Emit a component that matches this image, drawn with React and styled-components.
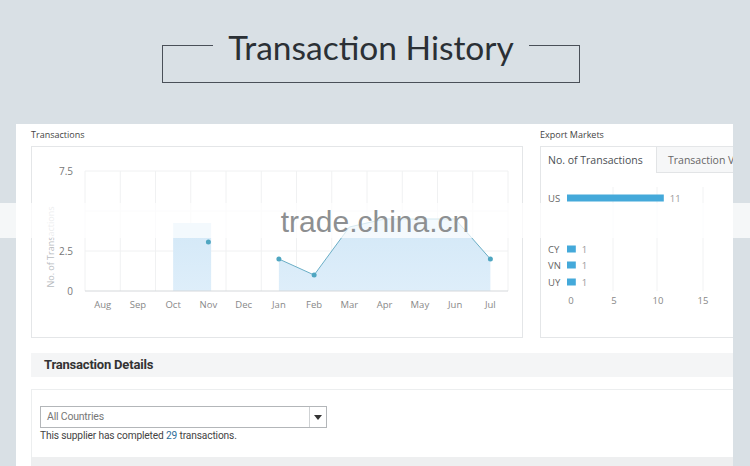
import React from "react";
import styled, { createGlobalStyle } from "styled-components";

const GlobalStyle = createGlobalStyle`
  html, body { margin: 0; padding: 0; background: #d9e0e5; }
  body { font-family: "Open Sans", "Noto Sans", sans-serif; }
`;

const Page = styled.div`
  position: relative;
  width: 750px;
  height: 466px;
  overflow: hidden;
  background: #d9e0e5;
`;

const Header = styled.header`
  height: 124px;
  display: flex;
  justify-content: center;
  padding: 45px 8px 0 0;
  box-sizing: border-box;
`;

const Frame = styled.div`
  width: 418px;
  height: 38px;
  box-sizing: border-box;
  border: 1px solid #4a5058;
  border-top: none;
`;

const FrameTop = styled.div`
  display: flex;
  align-items: center;
  height: 34px;
  margin-top: -18px;
  margin-left: -1px;
  margin-right: -1px;
`;

const FrameLine = styled.span`
  flex: 1;
  height: 1px;
  background: #4a5058;
  margin-top: 2px;
`;

const Title = styled.h1`
  margin: 5px 0 0;
  padding: 0 15px;
  font-family: Lato, "Open Sans", sans-serif;
  font-weight: 400;
  font-size: 33.5px;
  line-height: 34px;
  color: #2b3035;
  white-space: nowrap;
`;

const Panel = styled.main`
  margin-left: 16px;
  width: 717px;
  height: 342px;
  background: #fff;
  padding-left: 15px;
  box-sizing: border-box;
  overflow: hidden;
`;

const ChartsRow = styled.div`
  display: flex;
  gap: 17px;
`;

const Column = styled.section`
  flex: 0 0 ${(p) => p.$w}px;
  display: flex;
  flex-direction: column;
`;

const Label = styled.div`
  height: 22px;
  line-height: 22px;
  font-size: 9px;
  color: #444;
`;

const Card = styled.div`
  height: 192px;
  box-sizing: border-box;
  border: 1px solid #e4e6e8;
  display: flex;
  flex-direction: column;
`;

const Tabs = styled.div`
  display: flex;
  height: 26px;
  flex-shrink: 0;
`;

const Tab = styled.div`
  box-sizing: border-box;
  width: ${(p) => p.$w}px;
  flex-shrink: 0;
  padding-left: ${(p) => p.$pl}px;
  font-size: 10.5px;
  line-height: 26px;
  white-space: nowrap;
  overflow: hidden;
  color: ${(p) => (p.$active ? "#4b4f54" : "#666")};
  background: ${(p) => (p.$active ? "#fff" : "#f6f7f8")};
  border-left: ${(p) => (p.$active ? "none" : "1px solid #e2e4e6")};
  border-bottom: ${(p) => (p.$active ? "none" : "1px solid #e2e4e6")};
`;

const DetailsHeader = styled.div`
  margin-top: 15px;
  height: 24px;
  background: #f4f5f6;
  padding-left: 13px;
  font-family: Roboto, "Liberation Sans", sans-serif;
  font-weight: 700;
  font-size: 13px;
  letter-spacing: -0.2px;
  line-height: 24px;
  color: #333;
`;

const DetailsBody = styled.div`
  margin-top: 12px;
  border-top: 1px solid #eceeef;
  border-left: 1px solid #eceeef;
  padding: 16px 0 0 8px;
  font-family: Roboto, "Liberation Sans", sans-serif;
  display: flex;
  flex-direction: column;
`;

const Select = styled.div`
  width: 287px;
  height: 22px;
  box-sizing: border-box;
  border: 1px solid #b3b6b9;
  display: flex;
  align-items: stretch;
`;

const SelectText = styled.div`
  flex: 1;
  padding-left: 6px;
  font-size: 10.5px;
  line-height: 20px;
  color: #777;
  letter-spacing: -0.2px;
`;

const SelectArrow = styled.div`
  width: 16px;
  border-left: 1px solid #cfd2d4;
  display: flex;
  align-items: center;
  justify-content: center;
`;

const Note = styled.div`
  font-size: 10.2px;
  letter-spacing: -0.15px;
  line-height: 15px;
  color: #444;
`;

const Count = styled.span`
  color: #2f6e99;
`;

const TableHead = styled.div`
  margin-top: 14px;
  margin-left: -8px;
  height: 20px;
  background: #eeeff0;
`;

const Watermark = styled.div`
  position: absolute;
  left: 0;
  right: 0;
  top: 203px;
  height: 35px;
  background: rgba(255, 255, 255, 0.72);
  display: flex;
  align-items: center;
  justify-content: center;
  pointer-events: none;
`;

const WatermarkText = styled.span`
  font-family: "Liberation Sans", Arial, sans-serif;
  font-size: 30px;
  color: #8d8f91;
  line-height: 30px;
  margin-top: 2px;
`;

const months = ["Aug", "Sep", "Oct", "Nov", "Dec", "Jan", "Feb", "Mar", "Apr", "May", "Jun", "Jul"];
const X0 = 53;
const CW = 35.25;
const cx = (i) => X0 + CW / 2 + i * CW;
const vy = (v) => 144 - v * 16;

function TransactionsChart() {
  const pts = [
    [5, 2],
    [6, 1],
    [7, 4],
    [8, 4.5],
    [9, 4.5],
    [10, 4.5],
    [11, 2],
  ].map(([i, v]) => [cx(i), vy(v)]);
  const line = pts.map((p) => p.join(",")).join(" ");
  const area = `${pts[0][0]},144 ${line} ${pts[pts.length - 1][0]},144`;
  return (
    <svg width="490" height="190" style={{ display: "block" }}>
      <defs>
        <linearGradient id="ag" x1="0" y1="0" x2="0" y2="1">
          <stop offset="0" stopColor="#d3e8f7" />
          <stop offset="1" stopColor="#deeefa" />
        </linearGradient>
      </defs>
      {Array.from({ length: 13 }).map((_, i) => (
        <line key={i} x1={X0 + i * CW} x2={X0 + i * CW} y1={24} y2={144} stroke="#f0f1f2" />
      ))}
      {[24, 64, 104].map((y) => (
        <line key={y} x1={X0} x2={476} y1={y} y2={y} stroke="#f0f1f2" />
      ))}
      <rect x={cx(2)} y={76} width={38} height={68} fill="url(#ag)" />
      <polygon points={area} fill="url(#ag)" />
      <line x1={X0} x2={476} y1={144} y2={144} stroke="#d5d8db" />
      <polyline points={line} fill="none" stroke="#6aaec6" strokeWidth="1" />
      {[pts[0], pts[1], pts[6]].map((p, i) => (
        <circle key={i} cx={p[0]} cy={p[1]} r="2.5" fill="#4fa6c1" />
      ))}
      <circle cx={cx(3)} cy={95} r="2.5" fill="#4fa6c1" />
      {[
        ["7.5", 24],
        ["2.5", 104],
        ["0", 144],
      ].map(([t, y]) => (
        <text key={t} x={41} y={y + 4} textAnchor="end" fontSize="10" fill="#777" fontFamily="Open Sans">
          {t}
        </text>
      ))}
      <text
        transform="translate(22,100) rotate(-90)"
        textAnchor="middle"
        fontSize="9"
        fill="#b9bcbf"
        fontFamily="Open Sans"
      >
        No. of Transactions
      </text>
      {months.map((m, i) => (
        <text key={m} x={cx(i)} y={161} textAnchor="middle" fontSize="9.5" fill="#888" fontFamily="Open Sans">
          {m}
        </text>
      ))}
    </svg>
  );
}

function MarketsChart() {
  const rows = [
    ["US", 25, 11],
    ["CY", 76, 1],
    ["VN", 92, 1],
    ["UY", 109, 1],
  ];
  const unit = 8.8;
  return (
    <svg width="230" height="164" style={{ display: "block" }}>
      {[72, 116, 162, 206].map((x) => (
        <line key={x} x1={x} x2={x} y1={14} y2={118} stroke="#f1f2f3" />
      ))}
      {rows.map(([c, y, v]) => (
        <g key={c}>
          <text x={7} y={y + 3.5} fontSize="9.5" fill="#666" fontFamily="Open Sans">
            {c}
          </text>
          <rect x={26} y={y - 3.5} width={v * unit} height={7} fill="#44a9da" />
          <text x={26 + v * unit + 6} y={y + 3.5} fontSize="9.5" fill="#999" fontFamily="Open Sans">
            {v}
          </text>
        </g>
      ))}
      {[
        ["0", 30],
        ["5", 73],
        ["10", 117],
        ["15", 162],
      ].map(([t, x]) => (
        <text key={t} x={x} y={131} textAnchor="middle" fontSize="9.5" fill="#888" fontFamily="Open Sans">
          {t}
        </text>
      ))}
    </svg>
  );
}

export default function App() {
  return (
    <Page>
      <GlobalStyle />
      <Header>
        <Frame>
          <FrameTop>
            <FrameLine />
            <Title>Transaction History</Title>
            <FrameLine />
          </FrameTop>
        </Frame>
      </Header>
      <Panel>
        <ChartsRow>
          <Column $w={492}>
            <Label>Transactions</Label>
            <Card>
              <TransactionsChart />
            </Card>
          </Column>
          <Column $w={240}>
            <Label>Export Markets</Label>
            <Card>
              <Tabs>
                <Tab $active $w={115} $pl={7}>
                  No. of Transactions
                </Tab>
                <Tab $w={125} $pl={11}>
                  Transaction Value
                </Tab>
              </Tabs>
              <MarketsChart />
            </Card>
          </Column>
        </ChartsRow>
        <DetailsHeader>Transaction Details</DetailsHeader>
        <DetailsBody>
          <Select>
            <SelectText>All Countries</SelectText>
            <SelectArrow>
              <svg width="8" height="5" viewBox="0 0 8 5">
                <polygon points="0,0 8,0 4,5" fill="#333" />
              </svg>
            </SelectArrow>
          </Select>
          <Note>
            This supplier has completed <Count>29</Count> transactions.
          </Note>
          <TableHead />
        </DetailsBody>
      </Panel>
      <Watermark>
        <WatermarkText>trade.china.cn</WatermarkText>
      </Watermark>
    </Page>
  );
}
